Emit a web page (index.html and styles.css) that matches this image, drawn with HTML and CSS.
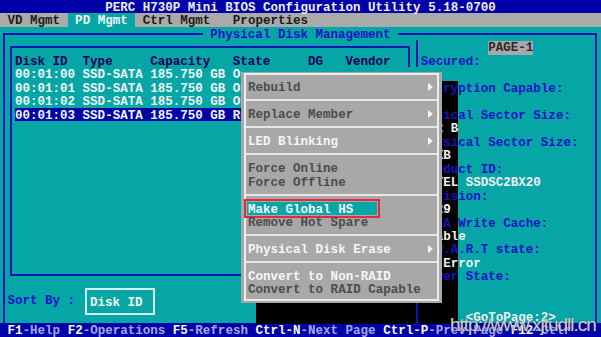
FILE: index.html
```html
<!DOCTYPE html>
<html lang="en">

<head>
  <meta charset="UTF-8">
  <meta name="viewport" content="width=device-width, initial-scale=1.0">
  <title>PERC H730P Mini BIOS Configuration Utility</title>
  <link rel="stylesheet" href="styles.css">
</head>

<body>
  <div class="screen">
    <div class="titlebar">PERC H730P Mini BIOS Configuration Utility 5.18-0700</div>
    <div class="menubar"> VD Mgmt <span class="tab-active"> PD Mgmt </span> Ctrl Mgmt   Properties</div>

    <div class="workspace">
      <fieldset class="frame">
        <legend> Physical Disk Management </legend>

        <div class="left">
          <div class="disk-box">
            <div class="thead">Disk ID  Type     Capacity   State     DG   Vendor</div>
            <div class="row">00:01:00 SSD-SATA 185.750 GB Online    -    ATA</div>
            <div class="row">00:01:01 SSD-SATA 185.750 GB Online    -    ATA</div>
            <div class="row">00:01:02 SSD-SATA 185.750 GB Online    -    ATA</div>
            <div class="row selected">00:01:03 SSD-SATA 185.750 GB Ready     -    ATA</div>
          </div>
          <div class="sort">
            <span class="sort-label">Sort By :</span>
            <span class="sort-box">Disk ID</span>
          </div>
        </div>

        <div class="props">
          <div class="line">         <span class="page">PAGE-1</span></div>
          <div class="line label">Secured:</div>
          <div class="line value">No</div>
          <div class="line label">Encryption Capable:</div>
          <div class="line value">No</div>
          <div class="line label">Logical Sector Size:</div>
          <div class="line value">512 B</div>
          <div class="line label">Physical Sector Size:</div>
          <div class="line value">4 KB</div>
          <div class="line label">Product ID:</div>
          <div class="line value">INTEL SSDSC2BX20</div>
          <div class="line label">Revision:</div>
          <div class="line value">0129</div>
          <div class="line label">SATA Write Cache:</div>
          <div class="line value">Enable</div>
          <div class="line label">S.M.A.R.T state:</div>
          <div class="line value">No Error</div>
          <div class="line label">Power State:</div>
          <div class="line value">On</div>
          <div class="line"></div>
          <div class="line value">      &lt;GoToPage:2&gt;</div>
        </div>
      </fieldset>
    </div>

    <div class="statusbar"> <b>F1</b>-Help <b>F2</b>-Operations <b>F5</b>-Refresh <b>Ctrl-N</b>-Next Page <b>Ctrl-P</b>-Prev Page <b>F12</b>-Ctlr</div>

    <!-- popup menu over the disk list -->
    <div class="menu-shadow"></div>
    <div class="menu">
      <div class="menu-box">
        <div class="item">Rebuild<i class="arrow"></i></div>
        <div class="sep"></div>
        <div class="item">Replace Member<i class="arrow"></i></div>
        <div class="sep"></div>
        <div class="item on">LED Blinking<i class="arrow"></i></div>
        <div class="sep"></div>
        <div class="item">Force Online</div>
        <div class="item">Force Offline</div>
        <div class="sep"></div>
        <div class="item on"><span class="hl">Make Global HS</span></div>
        <div class="item">Remove Hot Spare</div>
        <div class="sep"></div>
        <div class="item on">Physical Disk Erase<i class="arrow"></i></div>
        <div class="sep"></div>
        <div class="item on">Convert to Non-RAID</div>
        <div class="item">Convert to RAID Capable</div>
      </div>
    </div>

    <div class="watermark">http://www.xjtudll.cn</div>
  </div>
</body>

</html>
```
FILE: styles.css
```css
* {
  box-sizing: border-box;
}

body {
  margin: 0;
  background: #000;
}

.screen {
  --rh: 13.48px;
  --teal: #06a6a6;
  --navy: #0000a8;
  --line: #0a14b4;
  position: relative;
  width: 601px;
  height: 337px;
  overflow: hidden;
  font-family: "Liberation Mono", "DejaVu Sans Mono", monospace;
  font-size: 12.52px;
  font-weight: bold;
  /* taller line box than the cell drops the glyphs 2px, like the VGA font */
  line-height: calc(var(--rh) + 4px);
}

/* every text-mode line is one cell tall and keeps its spaces */
.titlebar,
.menubar,
.frame legend,
.thead,
.row,
.props .line,
.statusbar,
.item {
  height: var(--rh);
  white-space: pre;
}

.titlebar {
  padding-left: 105.2px;
  background: var(--navy);
  color: #eeeef8;
}

.menubar {
  background: #aaaaaa;
  color: #1a1a1a;
}

.menubar .tab-active {
  display: inline-block;
  height: var(--rh);
  vertical-align: top;
  background: var(--teal);
  color: #f4f4f4;
}

.workspace {
  height: calc(var(--rh) * 22);
  background: var(--teal);
}

.frame {
  display: grid;
  grid-template-columns: 411px 1fr;
  width: 594px;
  height: 100%;
  min-width: 0;
  margin: 0 0 0 3px;
  padding: 0;
  border: 2px solid var(--line);
  border-bottom: 0;
}

.frame legend {
  margin-left: 197.8px;
  padding: 0;
  color: #1414c4;
}

.left {
  padding-left: 5px;
}

.disk-box {
  width: 400px;
  height: 229.3px;
  margin-top: 5.8px;
  padding: 5.7px 0 0 3px;
  border: 2px solid var(--line);
}

.thead {
  color: #00005c;
}

.row {
  color: #eef6f6;
}

.row.selected {
  background: var(--navy);
  margin-right: 3px;
}

.sort {
  display: flex;
  align-items: center;
  margin: 12.5px 0 0 -2.5px;
}

.sort-label {
  color: #1414c4;
  white-space: pre;
  padding-top: 1px;
}

.sort-box {
  width: 70px;
  height: 27px;
  margin-left: 9.9px;
  padding: 6px 0 0 3px;
  border: 2px solid #d4f4f4;
  color: #f8f8f8;
  line-height: 14px;
  white-space: pre;
}

.props {
  position: relative;
  z-index: 2;
  padding-left: 2.7px;
  border-left: 2px solid var(--line);
}

.props .label {
  color: #1414c4;
}

.props .value {
  color: #f0f0f0;
}

.props .page {
  background: #a8a8a8;
  color: #2a2a2a;
}

.statusbar {
  background: var(--navy);
  color: #a4a8e6;
}

.statusbar b {
  color: #f8f8f8;
}

/* popup */
.menu-shadow {
  position: absolute;
  left: 256px;
  top: 81px;
  width: 202px;
  height: 242.5px;
  background: #000;
  z-index: 1;
}

.menu {
  position: absolute;
  left: 241px;
  top: 67.4px;
  width: 201px;
  height: 235.6px;
  padding: 1px 3px 2px 3px;
  /* upper half of the top cell row stays teal (half-block edge) */
  border-top: 5.6px solid var(--teal);
  background: #a8a8a8;
  z-index: 3;
}

.menu-box {
  height: 100%;
  padding-top: 4.9px;
  border: 2px solid #ececec;
}

.item {
  display: flex;
  justify-content: space-between;
  padding: 0 4px 0 2px;
  color: #4c4c4c;
}

.item.on {
  color: #f6f6f6;
}

.item .hl {
  display: block;
  width: 130px;
  height: var(--rh);
  margin-left: -1px;
  padding-left: 1px;
  background: var(--teal);
  outline: 2px solid #e8283c;
  outline-offset: 1px;
}

.arrow {
  align-self: center;
  width: 0;
  height: 0;
  border-left: 5px solid #f4f4f4;
  border-top: 4px solid transparent;
  border-bottom: 4px solid transparent;
}

.sep {
  height: var(--rh);
  background: linear-gradient(#e6e6e6, #e6e6e6) center / 100% 2px no-repeat;
}

.watermark {
  position: absolute;
  left: 450px;
  top: 314px;
  z-index: 4;
  font-family: "Liberation Sans", Arial, sans-serif;
  font-size: 19px;
  font-weight: normal;
  letter-spacing: -1px;
  line-height: 22px;
  color: rgba(222, 222, 222, 0.88);
  text-shadow: 0 0 1px #555;
  white-space: nowrap;
}
```
